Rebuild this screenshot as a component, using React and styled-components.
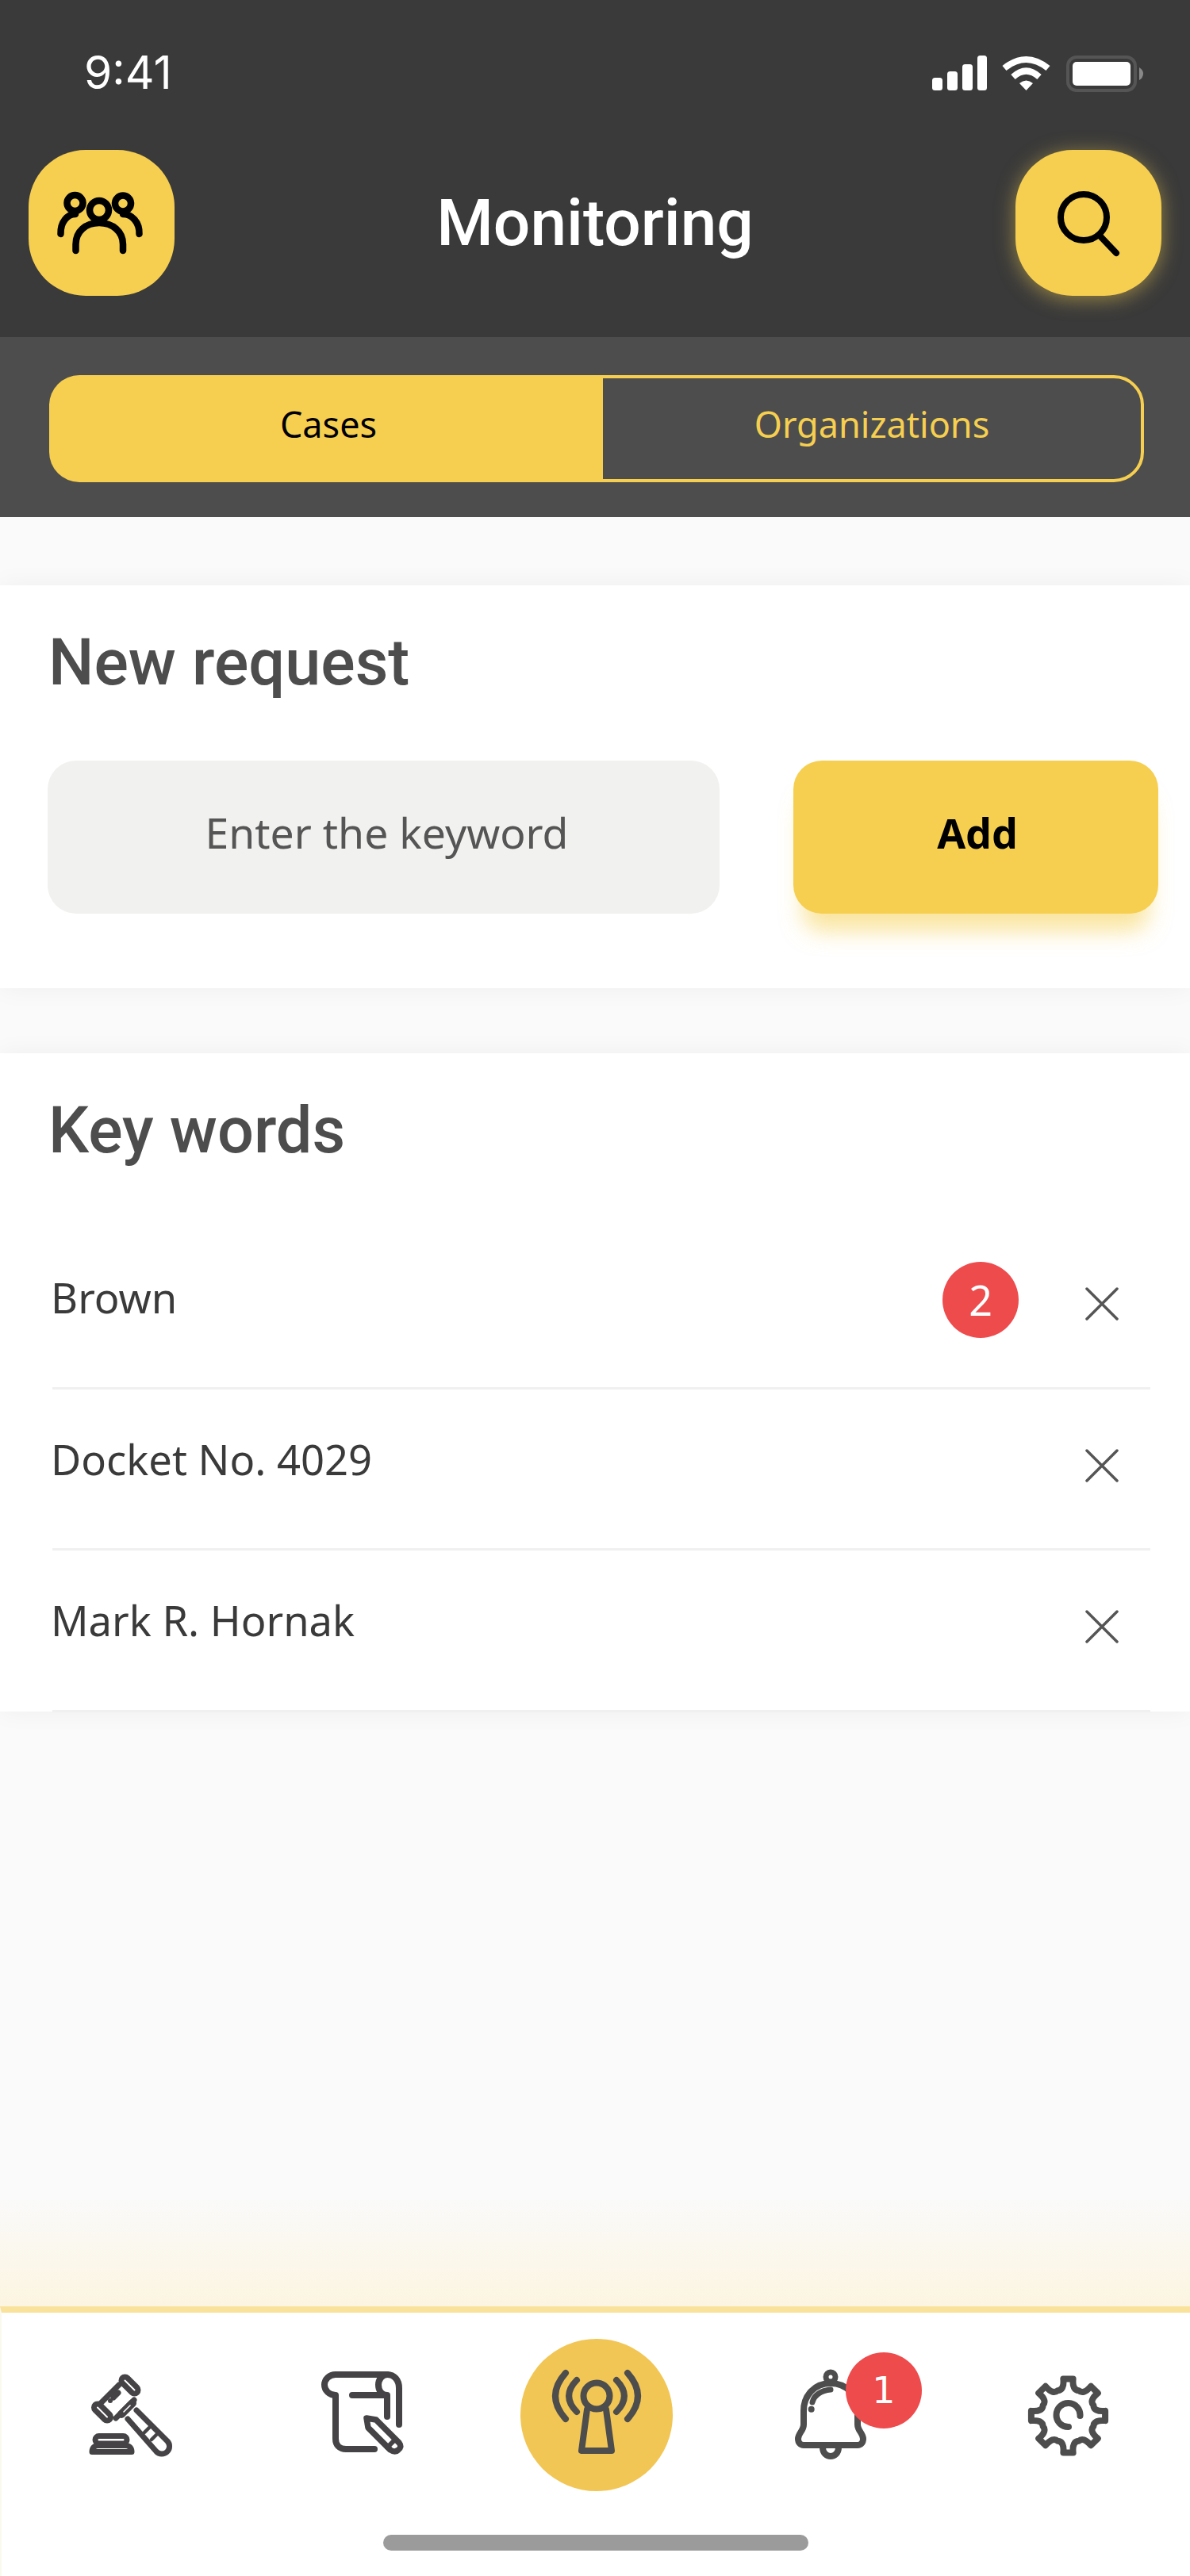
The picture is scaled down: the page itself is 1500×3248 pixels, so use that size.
import React from 'react';
import styled, { createGlobalStyle } from 'styled-components';

const YELLOW = '#f6cf50';
const FONT = '"Noto Sans", "Open Sans", sans-serif';
const HEADING_FONT = 'Roboto, "Noto Sans", sans-serif';

const GlobalStyle = createGlobalStyle`
  * { box-sizing: border-box; }
  html, body { margin: 0; padding: 0; background: #fafafa; }
`;

const Page = styled.div`
  width: 1500px;
  height: 3248px;
  display: flex;
  flex-direction: column;
  overflow: hidden;
  background: #fafafa;
  font-family: ${FONT};
`;

const Header = styled.header`
  height: 425px;
  background: #3a3a3a;
  display: flex;
  flex-direction: column;
`;

const StatusBar = styled.div`
  height: 189px;
  padding: 58px 58px 0 106px;
  display: flex;
  justify-content: space-between;
  align-items: flex-start;
`;

const Clock = styled.span`
  font-family: Inter, sans-serif;
  font-size: 57px;
  line-height: 68px;
  color: #fff;
`;

const StatusIcons = styled.svg`
  width: 267px;
  height: 46px;
  margin-top: 12px;
`;

const Toolbar = styled.div`
  display: flex;
  align-items: center;
  justify-content: space-between;
  padding: 0 36px;
`;

const RoundButton = styled.button`
  width: 184px;
  height: 184px;
  border: 0;
  padding: 0;
  border-radius: 72px;
  background: ${YELLOW};
  display: flex;
  align-items: center;
  justify-content: center;
  box-shadow: ${props => (props.$glow ? `0 4px 24px rgba(246, 207, 80, 0.5)` : 'none')};
`;

const Title = styled.h1`
  margin: 0;
  font-family: ${HEADING_FONT};
  font-size: 82px;
  font-weight: 500;
  line-height: 90px;
  color: #fff;
`;

const TabBar = styled.div`
  height: 227px;
  background: #4d4d4d;
  padding: 48px 58px 0 62px;
`;

const Tabs = styled.div`
  height: 135px;
  display: flex;
`;

const Tab = styled.div`
  display: flex;
  align-items: center;
  justify-content: center;
  padding: 0 0 12px ${props => (props.$active ? '10px' : '0')};
  font-size: 45px;
  color: ${props => (props.$active ? '#000' : YELLOW)};
  background: ${props => (props.$active ? YELLOW : 'transparent')};
  border: ${props => (props.$active ? '0' : `4px solid ${YELLOW}`)};
  border-radius: ${props => (props.$active ? '38px 0 0 38px' : '0 38px 38px 0')};
  width: ${props => (props.$active ? '694px' : '686px')};
`;

const Main = styled.main`
  flex: 1;
  padding-top: 86px;
  display: flex;
  flex-direction: column;
  background: linear-gradient(to bottom, #fafafa 0, #fafafa 2120px, #fcf5e1 100%);
`;

const Card = styled.section`
  background: #fff;
  box-shadow: 0 0 30px rgba(0, 0, 0, 0.05);
  padding-top: 59px;
`;

const SectionTitle = styled.h2`
  margin: 0 0 ${props => props.$gap}px 61px;
  font-family: ${HEADING_FONT};
  font-size: 81px;
  font-weight: 500;
  line-height: 78px;
  color: #4d4d4d;
`;

const RequestCard = styled(Card)`
  height: 508px;
  margin-bottom: 82px;
`;

const RequestForm = styled.div`
  display: flex;
  padding-left: 60px;
  gap: 93px;
`;

const KeywordField = styled.div`
  width: 847px;
  height: 193px;
  padding: 0 0 12px 8px;
  border-radius: 36px;
  background: #f1f1ef;
  display: flex;
  align-items: center;
  justify-content: center;
  font-size: 53.5px;
  color: #555;
`;

const AddButton = styled.button`
  width: 460px;
  height: 193px;
  padding: 0 0 12px 4px;
  border: 0;
  border-radius: 36px;
  background: ${YELLOW};
  font-family: ${FONT};
  font-size: 52px;
  font-weight: 700;
  color: #000;
  box-shadow: 0 34px 28px -12px rgba(246, 207, 80, 0.55);
`;

const KeywordsCard = styled(Card)`
  height: 830px;
`;

const KeywordRow = styled.div`
  height: 203.5px;
  margin: 0 50px 0 66px;
  border-bottom: 3px solid #f0f0f0;
  display: flex;
  align-items: center;
  padding-bottom: 24px;
`;

const KeywordText = styled.span`
  flex: 1;
  margin-left: -2px;
  font-size: 52.5px;
  line-height: 60px;
  color: #3a3a3a;
`;

const CountBadge = styled.span`
  width: 96px;
  height: 96px;
  border-radius: 50%;
  background: #ee4b4d;
  color: #fff;
  font-size: 52px;
  line-height: 96px;
  text-align: center;
  margin: 6px 84px 0 0;
`;

const RemoveIcon = styled.svg`
  width: 42px;
  height: 42px;
  margin: 16px 40px 0 0;
`;

const BottomNav = styled.nav`
  height: 340px;
  background: #fff;
  border-top: 8px solid #f9e29b;
  border-left: 2px solid #fbf8ee;
  display: flex;
  flex-direction: column;
  align-items: center;
`;

const NavRow = styled.div`
  width: 100%;
  height: 258px;
  display: grid;
  grid-template-columns: 324px 258px 336px 320px 220px;
  align-items: center;
  justify-items: center;
`;

const NavItem = styled.div`
  position: relative;
  display: flex;
  margin-top: ${props => props.$nudge || 0}px;
`;

const NavBadge = styled.span`
  position: absolute;
  left: 76px;
  top: 6px;
  width: 96px;
  height: 96px;
  border-radius: 50%;
  background: #ee4b4d;
  color: #fff;
  font-family: "DejaVu Sans", sans-serif;
  font-size: 46px;
  line-height: 96px;
  text-align: center;
`;

const HomeIndicator = styled.div`
  width: 536px;
  height: 20px;
  margin-top: 22px;
  border-radius: 10px;
  background: #9b9b9b;
`;

const GroupSvg = styled.svg`
  margin: 8px 6px 0 0;
`;

const StatusGlyphs = () => (
  <StatusIcons viewBox="0 0 267 46">
    <rect x="0" y="28" width="13" height="16" rx="3.5" fill="#fff" />
    <rect x="19" y="20" width="13" height="24" rx="3.5" fill="#fff" />
    <rect x="38" y="11" width="13" height="33" rx="3.5" fill="#fff" />
    <rect x="57" y="0" width="12" height="44" rx="3.5" fill="#fff" />
    <path d="M91 16Q118.5 -6 146 16" fill="none" stroke="#fff" strokeWidth="8" />
    <path d="M102 27Q118.5 12 135 27" fill="none" stroke="#fff" strokeWidth="8" />
    <path d="M110 35Q118.5 28 127 35L118.5 44Z" fill="#fff" />
    <rect x="171" y="2" width="85" height="42" rx="11" fill="none" stroke="#555" strokeWidth="4" />
    <rect x="177" y="8" width="73" height="30" rx="5" fill="#fff" />
    <path d="M261 15Q266 18 266 23Q266 28 261 31Z" fill="#888" />
  </StatusIcons>
);

const GroupIcon = () => (
  <GroupSvg width="130" height="130" viewBox="0 0 130 130" fill="none" stroke="#000" strokeWidth="8.5" strokeLinecap="round">
    <circle cx="65" cy="45" r="12" />
    <circle cx="34.5" cy="36" r="10" />
    <circle cx="95" cy="36.5" r="10" />
    <path d="M35.5 96V88C35.5 72 48 61 65 61C82 61 95 72 95 88V96" />
    <path d="M16.5 75C16 60 25 50 35 50" />
    <path d="M115.5 75C116 60 106 50 95 50" />
  </GroupSvg>
);

const SearchIcon = () => (
  <svg width="130" height="130" viewBox="0 0 130 130" fill="none" stroke="#000" strokeWidth="8" strokeLinecap="round">
    <circle cx="59" cy="58" r="29" />
    <path d="M80 82L100 103" />
  </svg>
);

const CloseGlyph = () => (
  <RemoveIcon viewBox="0 0 42 42" fill="none" stroke="#555" strokeWidth="3.5" strokeLinecap="round">
    <path d="M2 2L40 40M40 2L2 40" />
  </RemoveIcon>
);

const GavelIcon = () => (
  <svg width="150" height="150" viewBox="0 0 150 150" fill="none" stroke="#454345" strokeWidth="7" strokeLinecap="round" strokeLinejoin="round">
    <rect x="61.5" y="33" width="26" height="9" rx="4.5" transform="rotate(45 74.5 37.5)" />
    <rect x="27" y="67" width="26" height="9" rx="4.5" transform="rotate(45 40 71.5)" />
    <path d="M61 37L38 60M80 56L57 79" />
    <path d="M60 47L54 53" />
    <circle cx="50" cy="57" r="3" fill="#454345" stroke="none" />
    <path d="M64 74L78 60" strokeWidth="10" />
    <path d="M67 71L75 63" stroke="#fff" strokeWidth="1.6" />
    <path d="M83 69L122 108A9.5 9.5 0 0 1 108 121L72 80" />
    <path d="M93 97L102 88M102 106L110 98" strokeWidth="4.5" />
    <rect x="31" y="101.5" width="40" height="9.5" rx="4.7" />
    <path d="M27 121.5C27 116 30 113.5 35 113.5H69C74 113.5 77 116 77 121.5Z" />
  </svg>
);

const ScrollIcon = () => (
  <svg width="150" height="150" viewBox="0 0 150 150" fill="none" stroke="#454345" strokeWidth="8" strokeLinecap="round" strokeLinejoin="round">
    <path d="M123 87V41C123 31 117 24 108 24H43C35 24 29 30 29 37C29 44 35 50 43 50V105C43 113 48 118 56 118H92" />
    <path d="M108 24C101 24 97 31 97 37C97 44 101 50 108 50H64M108 50V77" />
    <path d="M82 79L94 81L123 110C126 114 125 117 122 119C119 122 115 121 112 119L84 91Z" strokeWidth="7.5" />
    <path d="M108 116L118 106" strokeWidth="6" />
  </svg>
);

const SignalDisc = styled.div`
  width: 192px;
  height: 192px;
  border-radius: 50%;
  background: #f2c655;
  display: flex;
  align-items: center;
  justify-content: center;
`;

const SignalIcon = () => (
  <svg width="192" height="192" viewBox="6 6 192 192" fill="none" stroke="#4d4d4d" strokeWidth="8" strokeLinecap="round" strokeLinejoin="round">
    <circle cx="102" cy="78" r="16.5" />
    <path d="M90 95L83 147H121L114 95" />
    <path d="M63 49Q37 78 63 107M77 58Q57 78 77 98M141 49Q167 78 141 107M127 58Q147 78 127 98" />
  </svg>
);

const BellIcon = () => (
  <svg width="180" height="150" viewBox="0 0 180 150" fill="none" stroke="#4d4d4d" strokeWidth="8" strokeLinecap="round" strokeLinejoin="round">
    <circle cx="57" cy="37" r="6" strokeWidth="7" />
    <path d="M57 45C37 45 23 60 23 80V97C23 105 16 108 16 115C16 120 19 123 23 123H91C95 123 98 120 98 115C98 108 91 105 91 97V80C91 60 77 45 57 45Z" />
    <path d="M47 126C47 133 52 137 57 137C62 137 67 133 67 126" />
    <path d="M34 69C36 60 45 54 57 53" strokeWidth="7" />
    <circle cx="32.7" cy="77.7" r="4" fill="#4d4d4d" stroke="none" />
  </svg>
);

// gear outline is the same tooth repeated eight times
const polar = (r, deg) => {
  const a = ((deg - 90) * Math.PI) / 180;
  return `${(71.5 + r * Math.cos(a)).toFixed(2)} ${(71 + r * Math.sin(a)).toFixed(2)}`;
};

const gearPath = () => {
  let d = `M${polar(47, -7.5)}`;
  for (let i = 0; i < 8; i++) {
    const a = i * 45;
    d += `L${polar(47, a + 7.5)}`;
    d += `C${polar(37, a + 8)} ${polar(33, a + 14)} ${polar(34.5, a + 22.5)}`;
    d += `C${polar(33, a + 31)} ${polar(37, a + 37)} ${polar(47, a + 37.5)}`;
  }
  return `${d}Z`;
};

const GearIcon = () => (
  <svg width="150" height="150" viewBox="0 0 150 150" fill="none" stroke="#4d4d4d" strokeWidth="8" strokeLinecap="round" strokeLinejoin="round">
    <path d={gearPath()} />
    <path d="M86.5 71A15 15 0 1 0 72 85" />
  </svg>
);

const keywords = [
  { id: 1, label: 'Brown', count: 2 },
  { id: 2, label: 'Docket No. 4029' },
  { id: 3, label: 'Mark R. Hornak' },
];

const App = () => (
  <Page>
    <GlobalStyle />
    <Header>
      <StatusBar>
        <Clock>9:41</Clock>
        <StatusGlyphs />
      </StatusBar>
      <Toolbar>
        <RoundButton><GroupIcon /></RoundButton>
        <Title>Monitoring</Title>
        <RoundButton $glow><SearchIcon /></RoundButton>
      </Toolbar>
    </Header>
    <TabBar>
      <Tabs>
        <Tab $active>Cases</Tab>
        <Tab>Organizations</Tab>
      </Tabs>
    </TabBar>
    <Main>
      <RequestCard>
        <SectionTitle $gap={84}>New request</SectionTitle>
        <RequestForm>
          <KeywordField>Enter the keyword</KeywordField>
          <AddButton>Add</AddButton>
        </RequestForm>
      </RequestCard>
      <KeywordsCard>
        <SectionTitle $gap={83}>Key words</SectionTitle>
        {keywords.map(item => (
          <KeywordRow key={item.id}>
            <KeywordText>{item.label}</KeywordText>
            {item.count && <CountBadge>{item.count}</CountBadge>}
            <CloseGlyph />
          </KeywordRow>
        ))}
      </KeywordsCard>
    </Main>
    <BottomNav>
      <NavRow>
        <NavItem><GavelIcon /></NavItem>
        <NavItem><ScrollIcon /></NavItem>
        <SignalDisc><SignalIcon /></SignalDisc>
        <NavItem $nudge={-20}>
          <BellIcon />
          <NavBadge>1</NavBadge>
        </NavItem>
        <NavItem $nudge={10}><GearIcon /></NavItem>
      </NavRow>
      <HomeIndicator />
    </BottomNav>
  </Page>
);

export default App;
